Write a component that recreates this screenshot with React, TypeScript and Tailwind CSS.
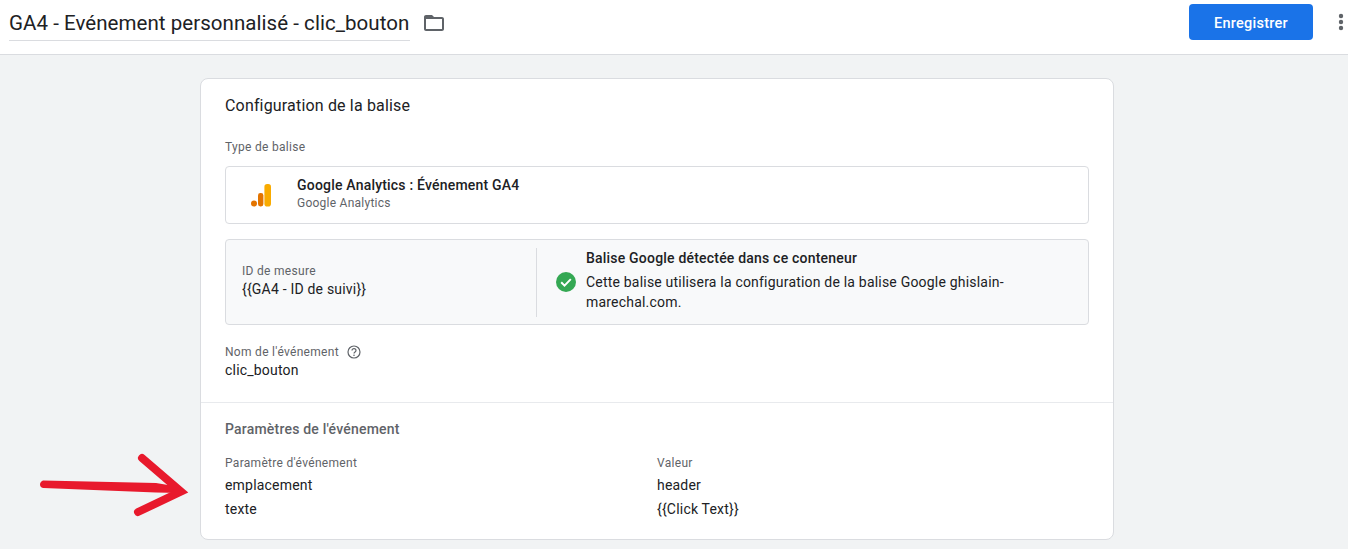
const font = { roboto: "font-['Roboto',sans-serif]" }

function AnalyticsLogo() {
  return (
    <svg width="20" height="23" viewBox="0 0 20 23" aria-hidden="true" className="shrink-0 mt-[4px]">
      <circle cx="3" cy="19.5" r="3" fill="#e37400" />
      <rect x="7" y="9" width="5.4" height="13.5" rx="2.4" fill="#e37400" />
      <rect x="13.4" y="0" width="6.6" height="22.5" rx="2.8" fill="#f9ab00" />
    </svg>
  )
}

function FolderIcon() {
  return (
    <svg width="24" height="24" viewBox="0 0 24 24" aria-hidden="true" className="ml-[12px] mt-[11px] shrink-0">
      <path
        fill="#5f6368"
        d="M20 6h-8l-2-2H4c-1.1 0-1.99.9-1.99 2L2 18c0 1.1.9 2 2 2h16c1.1 0 2-.9 2-2V8c0-1.1-.9-2-2-2zm0 12H4V8h16v10z"
      />
    </svg>
  )
}

function MoreIcon() {
  return (
    <svg width="24" height="24" viewBox="0 0 24 24" aria-hidden="true" className="mt-[10px] mr-[-5px] ml-[16px] shrink-0">
      <circle cx="12" cy="6" r="2.2" fill="#5f6368" />
      <circle cx="12" cy="12" r="2.2" fill="#5f6368" />
      <circle cx="12" cy="18" r="2.2" fill="#5f6368" />
    </svg>
  )
}

function CheckBadge() {
  return (
    <svg width="20" height="20" viewBox="0 0 20 20" aria-hidden="true" className="shrink-0">
      <circle cx="10" cy="10" r="10" fill="#34a853" />
      <path d="M5.2 10.3l3.3 3.3 6.3-6.5" fill="none" stroke="#fff" strokeWidth="2" />
    </svg>
  )
}

function HelpIcon() {
  return (
    <svg width="14" height="14" viewBox="0 0 14 14" aria-hidden="true">
      <circle cx="7" cy="7" r="6" fill="none" stroke="#5f6368" strokeWidth="1.2" />
      <path d="M5 5.6a2 2 0 0 1 4 0c0 1.3-2 1.5-2 3" fill="none" stroke="#5f6368" strokeWidth="1.2" />
      <circle cx="7" cy="10.3" r="0.8" fill="#5f6368" />
    </svg>
  )
}

function RedArrow() {
  return (
    <svg
      width="160"
      height="70"
      viewBox="0 0 160 70"
      aria-hidden="true"
      className="absolute left-[36px] top-[450px]"
    >
      <path
        d="M7 30.5C5 31 4 33 4 34.5C4 36.5 5.5 38 7.5 38L120 42.5L144 43L144 37L120 33Z"
        fill="#e8192c"
      />
      <path
        d="M106 8L145 41.5L102 62"
        fill="none"
        stroke="#e8192c"
        strokeWidth="8"
        strokeLinecap="round"
        strokeLinejoin="miter"
      />
    </svg>
  )
}

export default function App() {
  const label = 'text-xs leading-[16px] tracking-[0.3px] text-[#5f6368]'
  const value = 'text-sm leading-[20px] tracking-[0.2px] text-[#202124]'

  return (
    <div className={`relative h-[549px] overflow-hidden bg-[#f1f3f4] ${font.roboto}`}>
      <header className="h-[55px] bg-white border-b border-[#dadce0] flex items-start pl-[9px]">
        <h1 className="w-[401px] h-[41px] pt-[9px] border-b border-[#dadce0] text-[20.5px] leading-[29px] tracking-[0.05px] text-[#202124] whitespace-nowrap">
          GA4 - Evénement personnalisé - clic_bouton
        </h1>
        <FolderIcon />
        <button className="ml-auto mt-[4px] w-[124px] h-[36px] pt-[4px] rounded bg-[#1a73e8] text-white text-[14.5px] tracking-[0.25px] font-medium">
          Enregistrer
        </button>
        <MoreIcon />
      </header>

      <main className="pt-[23px] pl-[200px]">
        <section className="w-[914px] h-[462px] bg-white border border-[#dadce0] rounded-lg">
          <div className="px-[24px] pt-[17px]">
            <h2 className="text-base leading-[20px] tracking-[0.17px] text-[#202124]">Configuration de la balise</h2>
            <p className={`mt-[23px] ${label}`}>Type de balise</p>

            <div className="mt-[11px] h-[58px] pb-[3px] border border-[#dadce0] rounded flex items-center pl-[25px]">
              <AnalyticsLogo />
              <div className="ml-[26px]">
                <p className="text-sm leading-[18px] tracking-[0.2px] font-medium text-[#202124]">
                  Google Analytics : Événement GA4
                </p>
                <p className="mt-[1px] text-xs leading-[17px] tracking-[0.25px] text-[#5f6368]">Google Analytics</p>
              </div>
            </div>

            <div className="mt-[15px] h-[86px] bg-[#f8f9fa] border border-[#dadce0] rounded flex items-center">
              <div className="w-[311px] h-[69px] border-r border-[#dadce0] pl-[16px] pt-[15px]">
                <p className={label}>ID de mesure</p>
                <p className={value}>{'{{GA4 - ID de suivi}}'}</p>
              </div>
              <div className="flex items-center ml-[19px]">
                <CheckBadge />
                <div className="ml-[10px] w-[470px] pb-[4px]">
                  <p className="text-sm leading-[20px] tracking-[0.2px] font-medium text-[#202124]">
                    Balise Google détectée dans ce conteneur
                  </p>
                  <p className={`mt-[4px] ${value}`}>
                    Cette balise utilisera la configuration de la balise Google ghislain-marechal.com.
                  </p>
                </div>
              </div>
            </div>

            <div className="mt-[19px] flex items-center gap-[8px]">
              <span className={label}>Nom de l'événement</span>
              <HelpIcon />
            </div>
            <p className={value}>clic_bouton</p>
          </div>

          <div className="mt-[22px] border-t border-[#e8eaed] px-[24px] pt-[16px]">
            <h3 className="text-sm leading-[20px] tracking-[0.2px] font-medium text-[#5f6368]">Paramètres de l'événement</h3>
            <div className="mt-[16px] grid grid-cols-[432px_1fr]">
              <p className={label}>Paramètre d'événement</p>
              <p className={label}>Valeur</p>
              <p className={`mt-[4px] ${value}`}>emplacement</p>
              <p className={`mt-[4px] ${value}`}>header</p>
              <p className={`mt-[4px] ${value}`}>texte</p>
              <p className={`mt-[4px] ${value}`}>{'{{Click Text}}'}</p>
            </div>
          </div>
        </section>
      </main>

      <RedArrow />
    </div>
  )
}
